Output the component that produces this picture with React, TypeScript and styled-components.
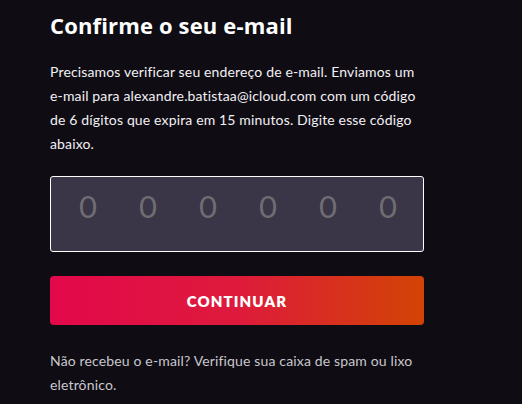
import * as React from "react"
import styled, { createGlobalStyle } from "styled-components"

const Global = createGlobalStyle`
  html, body {
    margin: 0;
    padding: 0;
    background: #0f0d13;
  }
  body {
    font-family: Lato, "Open Sans", sans-serif;
    color: #f2f0f5;
  }
`

const Page = styled.div`
  width: 522px;
  height: 404px;
  overflow: hidden;
  background: #0f0d13;
  padding: 0 50px;
  box-sizing: border-box;
`

const Form = styled.div`
  width: 374px;
  display: flex;
  flex-direction: column;
`

const Title = styled.h1`
  margin: 9px 0 0;
  font-family: "Open Sans", Lato, sans-serif;
  font-size: 22px;
  line-height: 32px;
  font-weight: 700;
  letter-spacing: 0.15px;
  color: #ffffff;
`

const Text = styled.p<{ $muted?: boolean }>`
  margin: 0;
  font-size: 14px;
  line-height: 24px;
  font-weight: 400;
  letter-spacing: 0.15px;
  color: ${(p) => (p.$muted ? "#c9c7cd" : "#f2f0f5")};
`

const Intro = styled(Text)`
  margin-top: 19px;
`

const CodeBox = styled.div`
  margin-top: 20px;
  height: 76px;
  box-sizing: border-box;
  border: 1px solid #ffffff;
  border-radius: 3px;
  background: #3a3547;
  display: grid;
  grid-template-columns: repeat(6, 60px);
  padding: 9px 0 0 7px;
`

const Digit = styled.span`
  text-align: center;
  font-size: 31px;
  line-height: 40px;
  color: #6f6c72;
`

const Button = styled.button`
  margin-top: 24px;
  height: 49px;
  border: none;
  border-radius: 4px;
  background: linear-gradient(90deg, #e3084b 0%, #de1a3c 50%, #d24404 100%);
  color: #ffffff;
  font-family: Lato, sans-serif;
  font-size: 15px;
  font-weight: 800;
  letter-spacing: 1.1px;
  cursor: pointer;
`

const Footer = styled(Text)`
  margin-top: 24px;
`

export default function App() {
  const digits = ["0", "0", "0", "0", "0", "0"]
  return (
    <Page>
      <Global />
      <Form>
        <Title>Confirme o seu e-mail</Title>
        <Intro>
          Precisamos verificar seu endereço de e-mail. Enviamos um e-mail para
          alexandre.batistaa@icloud.com com um código de 6 dígitos que expira
          em 15 minutos. Digite esse código abaixo.
        </Intro>
        <CodeBox>
          {digits.map((d, i) => (
            <Digit key={i}>{d}</Digit>
          ))}
        </CodeBox>
        <Button>CONTINUAR</Button>
        <Footer $muted>
          Não recebeu o e-mail? Verifique sua caixa de spam ou lixo eletrônico.
        </Footer>
      </Form>
    </Page>
  )
}
